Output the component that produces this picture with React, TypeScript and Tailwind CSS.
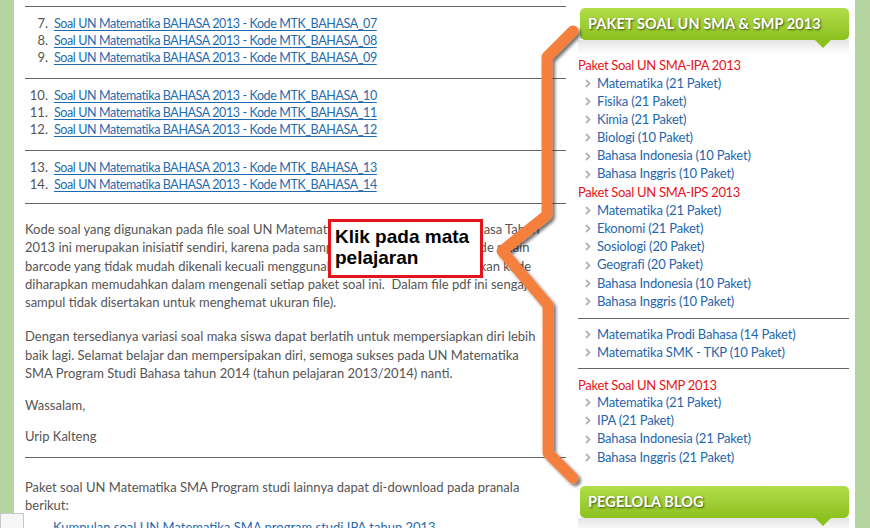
import React from "react";

const Chevron = () => (
  <svg width="6" height="9" viewBox="0 0 6 9" className="shrink-0">
    <path d="M1 1 L4.5 4.5 L1 8" fill="none" stroke="#b4b4b4" strokeWidth="1.8" />
  </svg>
);

const Rule = () => <div className="h-px bg-[#66645e]" />;

function WidgetHeader({ title }: { title: string }) {
  return (
    <div className="relative">
      <div className="ml-[2px] w-[269px] h-[32px] rounded-[5px] bg-gradient-to-b from-[#b2dd48] to-[#8cc11d] flex items-center pl-[8px] text-white font-bold text-[14.5px] tracking-[0.1px] [text-shadow:1px_1px_2px_rgba(0,0,0,0.6)]">
        {title}
      </div>
      <div className="h-[14px] bg-gradient-to-b from-[#e4e4e4] to-white" />
      <div className="absolute left-[236px] top-[31px] w-0 h-0 border-l-[9px] border-r-[9px] border-t-[9px] border-l-transparent border-r-transparent border-t-[#8cc11d]" />
    </div>
  );
}

function Item({ text }: { text: string }) {
  return (
    <div className="flex items-center h-[18.2px] pl-[7px] gap-[6px]">
      <Chevron />
      <span className="text-[#1f66ad] whitespace-nowrap tracking-[-0.2px]">{text}</span>
    </div>
  );
}

function Heading({ text, className = "" }: { text: string; className?: string }) {
  return (
    <div className={"h-[18.2px] leading-[18.2px] text-[#e5141b] text-[13px] tracking-[-0.3px] whitespace-nowrap " + className}>
      {text}
    </div>
  );
}

function LinkRow({ n, code }: { n: number; code: string }) {
  return (
    <div className="flex h-[17px] leading-[17px] whitespace-nowrap">
      <span className="w-[23px] text-right text-[#555]">{n}.</span>
      <a className="ml-[6px] text-[#1f6bb0] underline decoration-1 underline-offset-[2px] text-[12.5px] tracking-[-0.4px]">
        Soal UN Matematika BAHASA 2013 - Kode MTK_BAHASA_{code}
      </a>
    </div>
  );
}

export default function App() {
  return (
    <div className="relative w-[870px] h-[528px] overflow-hidden bg-white flex font-['Lato',sans-serif] text-[13px]">
      <div className="w-[14px] shrink-0 bg-[#b5d5a0]" />
      <div className="flex-1 flex">
        <main className="ml-[11px] w-[541px] pt-[6px] text-[#555]">
          <Rule />
          <div className="pt-[8px] pb-[12px]">
            <LinkRow n={7} code="07" />
            <LinkRow n={8} code="08" />
            <LinkRow n={9} code="09" />
          </div>
          <Rule />
          <div className="pt-[7.5px] pb-[12.5px]">
            <LinkRow n={10} code="10" />
            <LinkRow n={11} code="11" />
            <LinkRow n={12} code="12" />
          </div>
          <Rule />
          <div className="pt-[7.5px] pb-[10.5px]">
            <LinkRow n={13} code="13" />
            <LinkRow n={14} code="14" />
          </div>
          <Rule />
          <p className="mt-[16px] leading-[18.25px] whitespace-nowrap">
            Kode soal yang digunakan pada file soal UN Matematika SMA Program Studi Bahasa Tahun
            <br />
            2013 ini merupakan inisiatif sendiri, karena pada sampul soal tidak tercantum kode selain
            <br />
            barcode yang tidak mudah dikenali kecuali menggunakan alat pemindai. Pemberikan kode
            <br />
            diharapkan memudahkan dalam mengenali setiap paket soal ini.&nbsp; Dalam file pdf ini sengaja
            <br />
            sampul tidak disertakan untuk menghemat ukuran file).
          </p>
          <p className="mt-[16px] leading-[18.25px] whitespace-nowrap">
            Dengan tersedianya variasi soal maka siswa dapat berlatih untuk mempersiapkan diri lebih
            <br />
            baik lagi. Selamat belajar dan mempersipakan diri, semoga sukses pada UN Matematika
            <br />
            SMA Program Studi Bahasa tahun 2014 (tahun pelajaran 2013/2014) nanti.
          </p>
          <p className="mt-[14px] leading-[18px]">Wassalam,</p>
          <p className="mt-[13px] leading-[18px]">Urip Kalteng</p>
          <div className="mt-[12px]">
            <Rule />
          </div>
          <p className="mt-[19.5px] leading-[18.25px] whitespace-nowrap">
            Paket soal UN Matematika SMA Program studi lainnya dapat di-download pada pranala
            <br />
            berikut:
          </p>
          <div className="mt-[4px] pl-[28px] leading-[18px] whitespace-nowrap">
            <a className="text-[#1f6bb0]">Kumpulan soal UN Matematika SMA program studi IPA tahun 2013</a>
          </div>
        </main>
        <aside className="ml-[12px] w-[271px] pt-[8px]">
          <WidgetHeader title="PAKET SOAL UN SMA & SMP 2013" />
          <Heading text="Paket Soal UN SMA-IPA 2013" className="mt-[2px]" />
          <Item text="Matematika (21 Paket)" />
          <Item text="Fisika (21 Paket)" />
          <Item text="Kimia (21 Paket)" />
          <Item text="Biologi (10 Paket)" />
          <Item text="Bahasa Indonesia (10 Paket)" />
          <Item text="Bahasa Inggris (10 Paket)" />
          <Heading text="Paket Soal UN SMA-IPS 2013" />
          <Item text="Matematika (21 Paket)" />
          <Item text="Ekonomi (21 Paket)" />
          <Item text="Sosiologi (20 Paket)" />
          <Item text="Geografi (20 Paket)" />
          <Item text="Bahasa Indonesia (10 Paket)" />
          <Item text="Bahasa Inggris (10 Paket)" />
          <div className="mt-[7px] mb-[7px]">
            <Rule />
          </div>
          <Item text="Matematika Prodi Bahasa (14 Paket)" />
          <Item text="Matematika SMK - TKP (10 Paket)" />
          <div className="mt-[6px] mb-[6.5px]">
            <Rule />
          </div>
          <Heading text="Paket Soal UN SMP 2013" />
          <Item text="Matematika (21 Paket)" />
          <Item text="IPA (21 Paket)" />
          <Item text="Bahasa Indonesia (21 Paket)" />
          <Item text="Bahasa Inggris (21 Paket)" />
          <div className="mt-[19.5px]">
            <WidgetHeader title="PEGELOLA BLOG" />
          </div>
        </aside>
        <div className="w-[6px]" />
      </div>
      <div className="w-[15px] shrink-0 bg-[#b5d5a0]" />

      {/* overlay: arrow */}
      <svg className="absolute left-0 top-0 pointer-events-none" width="870" height="528" viewBox="0 0 870 528">
        <defs>
          <filter id="sh" x="-20%" y="-20%" width="140%" height="140%">
            <feDropShadow dx="2.5" dy="2.5" stdDeviation="1.6" floodColor="#000" floodOpacity="0.55" />
          </filter>
        </defs>
        <polyline
          points="573,31 547,57 547,215 502,251 548,305 548,453 573,478"
          fill="none"
          stroke="#f5803e"
          strokeWidth="11"
          strokeLinecap="round"
          strokeLinejoin="round"
          filter="url(#sh)"
        />
      </svg>

      {/* overlay: callout */}
      <div className="absolute left-[328px] top-[219px] w-[155px] h-[59px] border-[3px] border-[#e3141b] bg-white pl-[4px] pt-[4px] font-['Liberation_Sans',Arial,sans-serif] font-bold text-[19px] leading-[21px] text-black whitespace-nowrap">
        Klik pada mata
        <br />
        pelajaran
      </div>

      {/* overlay: small floating box bottom-left */}
      <div className="absolute left-0 top-[513px] w-[24px] h-[20px] border border-[#c8c8c8] bg-[#f6f6f6]" />
    </div>
  );
}
